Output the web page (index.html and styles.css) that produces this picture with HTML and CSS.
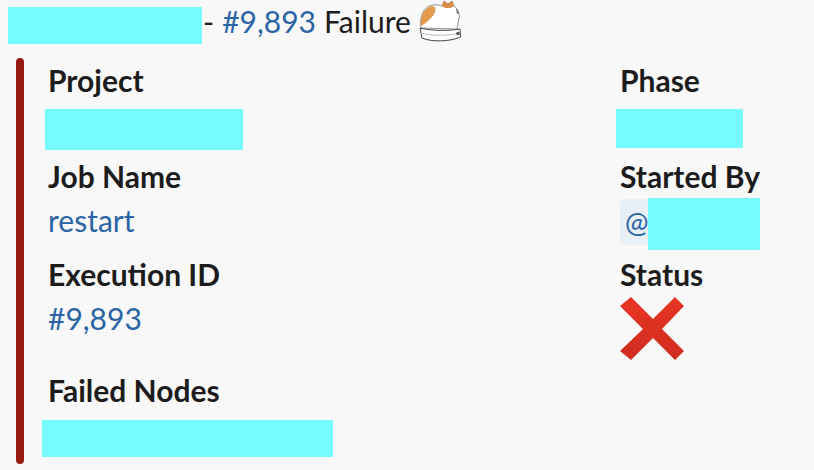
FILE: index.html
```html
<!DOCTYPE html>
<html lang="en">
<head>
<meta charset="utf-8">
<title>Job failure</title>
<link rel="stylesheet" href="styles.css">
</head>
<body>
<div class="head">
  <span class="redact redact-title"></span>
  <span class="dash">-</span>
  <a class="link">#9,893</a>
  <span>Failure</span>
  <svg class="cat" width="46" height="44" viewBox="0 0 46 44" aria-hidden="true">
    <path d="M4 28C2 16 7 6 16 5C20 4 23 6 25 6L27 1L31 4L35 1L37 6C41 9 43 14 42 18L40 29Z" fill="#fff" stroke="#777" stroke-width=".8"/>
    <path d="M3.600 26C3 16 7 8 15 6L18 7C20 12 15 17 12 20C9 23 6 25 3.600 26Z" fill="#e39a4c"/>
    <path d="M25 6L27 1L31 4L35 1L37 6C33 9 28 9 25 6Z" fill="#d98c42"/>
    <path d="M39 8L42 13L40 14Z" fill="#666"/>
    <path d="M3 28C14 31 32 31 43 29L43.500 37C32 42 14 42 5 38Z" fill="#fff" stroke="#444" stroke-width="1"/>
    <path d="M4 33C14 36 32 36 43 33" fill="none" stroke="#bbb" stroke-width="1"/>
    <circle cx="41" cy="33.500" r="1.800" fill="#555"/>
  </svg>
</div>
<div class="attachment">
  <div class="bar"></div>
  <div class="fields">
    <div class="field">
      <div class="label">Project</div>
      <div class="redact redact-project"></div>
    </div>
    <div class="field">
      <div class="label">Phase</div>
      <div class="redact redact-phase"></div>
    </div>
    <div class="field">
      <div class="label">Job Name</div>
      <div class="value"><a class="link">restart</a></div>
    </div>
    <div class="field">
      <div class="label">Started By</div>
      <div class="mention"><span class="at">@</span><span class="redact redact-user"></span></div>
    </div>
    <div class="field">
      <div class="label">Execution ID</div>
      <div class="value"><a class="link">#9,893</a></div>
    </div>
    <div class="field">
      <div class="label">Status</div>
      <svg class="cross" width="66" height="64" viewBox="0 0 66 64" aria-hidden="true">
        <defs>
          <linearGradient id="crossFill" x1="0" y1="0" x2="0" y2="1">
            <stop offset="0" stop-color="#e93524"/>
            <stop offset="1" stop-color="#cf2c1f"/>
          </linearGradient>
        </defs>
        <path d="M11 0L33 22L55 0L64 9L42 32L64 54L55 63L33 41L11 63L0 54L23 32L0 9Z" fill="url(#crossFill)"/>
      </svg>
    </div>
    <div class="field field-wide">
      <div class="label">Failed Nodes</div>
      <div class="redact redact-nodes"></div>
    </div>
  </div>
</div>
</body>
</html>
```
FILE: styles.css
```css
html, body {
  margin: 0;
  padding: 0;
  width: 814px;
  height: 470px;
  overflow: hidden;
  background: #f8f8f8;
  color: #1d1c1d;
  font-family: Lato, "Open Sans", sans-serif;
  font-size: 30px;
}

.redact {
  display: block;
  background: #76fbff;
}

.link {
  color: #2a64a5;
}

.head {
  display: flex;
  align-items: flex-start;
  height: 44px;
  padding-left: 8px;
  line-height: 42px;
  white-space: pre;
}

.redact-title {
  width: 194px;
  height: 37px;
  margin-top: 7px;
  margin-right: 1px;
}

.dash {
  margin-right: 8px;
}

.head .link {
  margin-right: 8px;
}

.cat {
  margin-left: 6px;
  margin-top: 0;
}

.attachment {
  display: flex;
  margin-top: 14px;
  padding-left: 16px;
}

.bar {
  flex: none;
  width: 8px;
  height: 406px;
  border-radius: 4px;
  background: #971b13;
}

.fields {
  display: grid;
  grid-template-columns: 572px 1fr;
  grid-template-rows: 96px 98px 116px auto;
  padding-left: 24px;
  margin-top: 1px;
}

.field-wide {
  grid-column: 1 / -1;
}

.label {
  height: 44px;
  line-height: 42px;
  font-weight: 700;
}

.value {
  height: 44px;
  line-height: 42px;
}

.redact-project {
  width: 198px;
  height: 41px;
  margin: 6px 0 0 -3px;
}

.redact-phase {
  width: 127px;
  height: 39px;
  margin: 6px 0 0 -4px;
}

.mention {
  display: flex;
  width: 140px;
  height: 46px;
  border-radius: 6px;
  background: #e8eff5;
  position: relative;
}

.at {
  color: #2a64a5;
  padding-left: 5px;
  font-size: 28px;
  line-height: 46px;
}

.redact-user {
  position: absolute;
  left: 28px;
  top: -1px;
  width: 112px;
  height: 52px;
}

.cross {
  display: block;
}

.redact-nodes {
  width: 291px;
  height: 37px;
  margin: 7px 0 0 -6px;
}
```
